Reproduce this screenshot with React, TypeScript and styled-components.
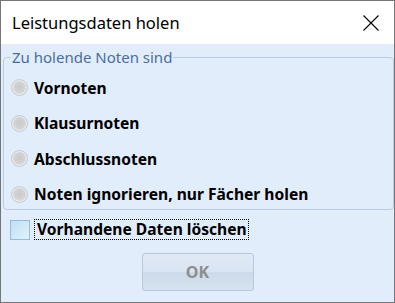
import React from "react";
import styled, { createGlobalStyle } from "styled-components";

const Global = createGlobalStyle`
  html, body { margin: 0; padding: 0; background: #ffffff; }
  body { font-family: "Noto Sans", "Open Sans", sans-serif; }
  * { box-sizing: border-box; }
`;

const Window = styled.div`
  width: 395px;
  height: 303px;
  border: 1px solid #767676;
  display: flex;
  flex-direction: column;
  background: #e1edfb;
`;

const TitleBar = styled.div`
  height: 43px;
  background: #ffffff;
  display: flex;
  align-items: center;
  justify-content: space-between;
  padding: 0 15px 0 11px;
  flex-shrink: 0;
`;

const Title = styled.span`
  font-size: 16.5px;
  color: #000;
`;

const Body = styled.div`
  flex: 1;
  display: flex;
  flex-direction: column;
  padding: 5px 0 0 2px;
`;

const Group = styled.fieldset`
  margin: 0;
  padding: 4px 0 0 7px;
  border: 1px solid #b9cde2;
  border-radius: 4px;
  height: 161px;
  display: flex;
  flex-direction: column;
`;

const Legend = styled.legend`
  font-size: 15px;
  color: #4a6da3;
  padding: 0 1px;
  margin-left: 0px;
  line-height: 17px;
`;

const RadioRow = styled.label`
  display: flex;
  align-items: center;
  gap: 6px;
  height: 35.5px;
`;

const Radio = styled.span`
  width: 17px;
  height: 17px;
  border-radius: 50%;
  border: 1px solid #c3cbd5;
  background: radial-gradient(circle at 50% 45%, #c9c9c9 0%, #d4d4d4 50%, #e4e4e4 80%, #efefef 100%);
  box-shadow: inset 0 0 0 1px #e9edf1;
  flex-shrink: 0;
`;

const Label = styled.span`
  font-size: 15.6px;
  font-weight: 700;
  color: #000;
`;

const CheckRow = styled.label`
  display: flex;
  align-items: center;
  gap: 4px;
  margin: 9px 0 0 7px;
`;

const Check = styled.span`
  width: 20px;
  height: 20px;
  border: 1px solid #8ebfe2;
  background: linear-gradient(135deg, #bfe0f3 0%, #d4ebf8 60%, #e2f2fb 100%);
  flex-shrink: 0;
`;

const FocusLabel = styled.span`
  font-size: 15.6px;
  font-weight: 700;
  color: #000;
  border: 1px dotted #000;
  padding: 0 1px 0 2px;
  line-height: 19px;
`;

const ButtonRow = styled.div`
  display: flex;
  justify-content: center;
  margin-top: 13px;
  padding-right: 2px;
`;

const OkButton = styled.button`
  width: 112px;
  height: 38px;
  border: 1px solid #b6c9de;
  border-radius: 3px;
  background: linear-gradient(#dfe9f5 0%, #d9e5f2 48%, #ccdaea 52%, #d6e2ef 100%);
  color: #8e8e8e;
  font-family: "Noto Sans", "Open Sans", sans-serif;
  font-size: 16px;
  font-weight: 700;
  padding: 0;
`;

const CloseIcon = () => (
  <svg width="16" height="16" viewBox="0 0 16 16">
    <path d="M0.5 0.5 L15.5 15.5 M15.5 0.5 L0.5 15.5" stroke="#000" strokeWidth="1.1" fill="none" />
  </svg>
);

const options = ["Vornoten", "Klausurnoten", "Abschlussnoten", "Noten ignorieren, nur Fächer holen"];

export default function App() {
  return (
    <>
      <Global />
      <Window>
        <TitleBar>
          <Title>Leistungsdaten holen</Title>
          <CloseIcon />
        </TitleBar>
        <Body>
          <Group>
            <Legend>Zu holende Noten sind</Legend>
            {options.map((o) => (
              <RadioRow key={o}>
                <Radio />
                <Label>{o}</Label>
              </RadioRow>
            ))}
          </Group>
          <CheckRow>
            <Check />
            <FocusLabel>Vorhandene Daten löschen</FocusLabel>
          </CheckRow>
          <ButtonRow>
            <OkButton>OK</OkButton>
          </ButtonRow>
        </Body>
      </Window>
    </>
  );
}
